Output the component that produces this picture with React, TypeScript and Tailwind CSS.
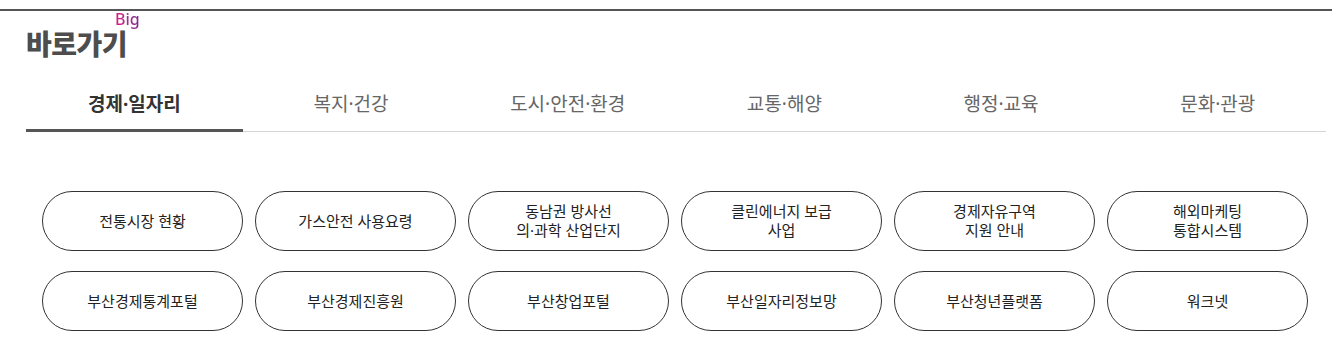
import React, { useState } from 'react';

const TABS = ['경제·일자리', '복지·건강', '도시·안전·환경', '교통·해양', '행정·교육', '문화·관광'];

const LINKS: string[][] = [
  ['전통시장 현황'],
  ['가스안전 사용요령'],
  ['동남권 방사선', '의·과학 산업단지'],
  ['클린에너지 보급', '사업'],
  ['경제자유구역', '지원 안내'],
  ['해외마케팅', '통합시스템'],
  ['부산경제통계포털'],
  ['부산경제진흥원'],
  ['부산창업포털'],
  ['부산일자리정보망'],
  ['부산청년플랫폼'],
  ['워크넷'],
];

// Latin font first so the middle dot stays narrow, Hangul falls through to CJK
const font = { fontFamily: '"Noto Sans", "Noto Sans CJK KR", sans-serif' };

export default function App() {
  const [active, setActive] = useState(0);

  return (
    <div className="w-[1332px] h-[362px] bg-white pt-[9px]" style={font}>
      <div className="border-t-2 border-[#555]">
        <div className="pl-[26px] pr-[6px]">
          {/* title */}
          <div className="relative inline-block pt-[19px] pb-[3px]">
            <h2 className="text-[28px] leading-[28px] font-black text-[#4d4d4d] tracking-[-0.5px]">바로가기</h2>
            <span className="absolute left-[89px] top-[-2px] text-[16px] leading-[20px] font-medium bg-gradient-to-r from-[#d81b7f] to-[#7a2b8f] bg-clip-text text-transparent">
              Big
            </span>
          </div>

          {/* tabs */}
          <ul className="mt-[15px] flex border-b border-[#d4d4d4]">
            {TABS.map((tab, i) => (
              <li key={tab} className="flex-1">
                <button
                  type="button"
                  onClick={() => setActive(i)}
                  className={`relative w-full h-[55px] text-[19px] leading-[24px] ${
                    i === active ? 'font-bold text-[#333]' : 'text-[#666]'
                  }`}
                >
                  {tab}
                  {i === active && <span className="absolute left-0 right-0 bottom-[-1px] h-[3px] bg-[#555]" />}
                </button>
              </li>
            ))}
          </ul>

          {/* link buttons */}
          <div className="mt-[59px] pl-[16px] pr-[18px] grid grid-cols-6 gap-x-[12px] gap-y-[20px]">
            {LINKS.map((lines) => (
              <a
                key={lines.join('')}
                href="#"
                className="h-[60px] rounded-full border border-[#333] flex flex-col items-center justify-center text-[15px] leading-[19px] text-[#222] text-center"
              >
                {lines.map((l) => (
                  <span key={l}>{l}</span>
                ))}
              </a>
            ))}
          </div>
        </div>
      </div>
    </div>
  );
}
